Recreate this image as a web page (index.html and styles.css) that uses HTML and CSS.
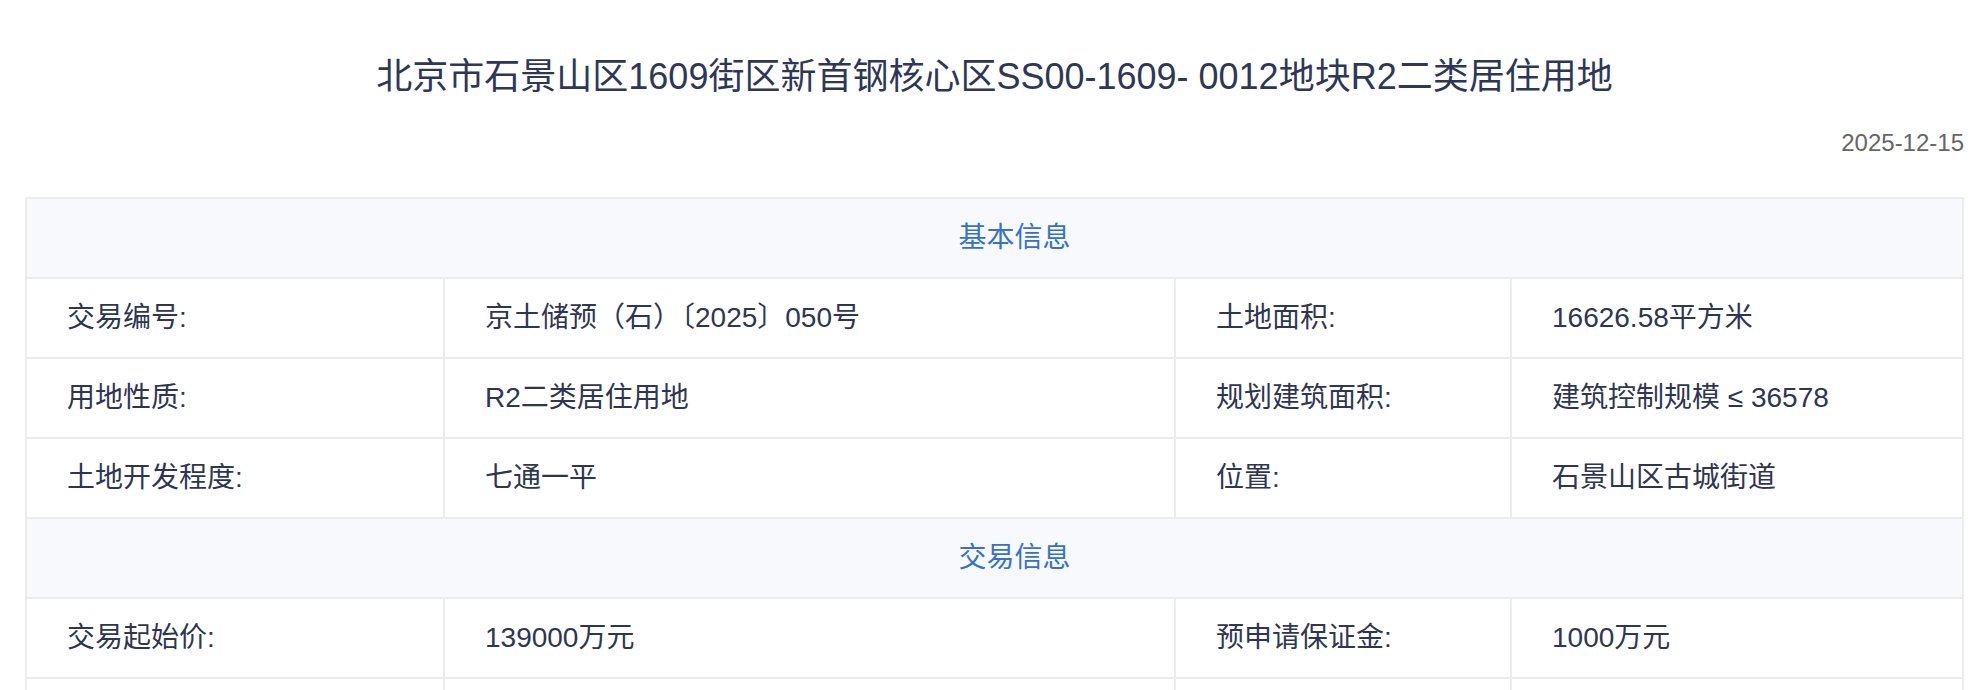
FILE: index.html
```html
<!DOCTYPE html>
<html lang="zh-CN">
<head>
<meta charset="utf-8">
<title>北京市石景山区1609街区新首钢核心区SS00-1609- 0012地块R2二类居住用地</title>
<link rel="stylesheet" href="styles.css">
</head>
<body>
<div class="page">
  <h1 class="title">北京市石景山区1609街区新首钢核心区SS00-1609- 0012地块R2二类居住用地</h1>
  <div class="date">2025-12-15</div>
  <table class="info">
    <colgroup>
      <col class="c1"><col class="c2"><col class="c3"><col class="c4">
    </colgroup>
    <tbody>
      <tr class="section"><td colspan="4">基本信息</td></tr>
      <tr>
        <td>交易编号:</td><td>京土储预（石）〔2025〕050号</td>
        <td>土地面积:</td><td>16626.58平方米</td>
      </tr>
      <tr>
        <td>用地性质:</td><td>R2二类居住用地</td>
        <td>规划建筑面积:</td><td>建筑控制规模 ≤ 36578</td>
      </tr>
      <tr>
        <td>土地开发程度:</td><td>七通一平</td>
        <td>位置:</td><td>石景山区古城街道</td>
      </tr>
      <tr class="section"><td colspan="4">交易信息</td></tr>
      <tr>
        <td>交易起始价:</td><td>139000万元</td>
        <td>预申请保证金:</td><td>1000万元</td>
      </tr>
      <tr>
        <td></td><td></td><td></td><td></td>
      </tr>
    </tbody>
  </table>
</div>
</body>
</html>
```
FILE: styles.css
```css
html, body {
  margin: 0;
  padding: 0;
  background: #ffffff;
}

body {
  font-family: "Liberation Sans", "Noto Sans CJK SC", sans-serif;
  color: #2f3652;
}

.page {
  padding: 0 20px 0 25px;
}

.title {
  margin: 0;
  padding-top: 52px;
  font-size: 36px;
  line-height: 50px;
  font-weight: 400;
  text-align: center;
  color: #2f3756;
}

.date {
  margin-top: 26px;
  font-size: 24px;
  line-height: 30px;
  text-align: right;
  color: #666666;
}

.info {
  margin-top: 39px;
  width: 100%;
  table-layout: fixed;
  border-collapse: separate;
  border-spacing: 0;
  border-top: 2px solid #ececee;
  border-left: 2px solid #ececee;
  font-size: 28px;
}

.c1 { width: 418px; }
.c2 { width: 731px; }
.c3 { width: 336px; }
.c4 { width: 452px; }

.info td {
  box-sizing: border-box;
  height: 80px;
  padding: 0 0 0 40px;
  border-right: 2px solid #ececee;
  border-bottom: 2px solid #ececee;
  line-height: 36px;
  vertical-align: middle;
  white-space: nowrap;
}

.info .section td {
  text-align: center;
  background: #f8f9fd;
  color: #3672c9;
}
```
